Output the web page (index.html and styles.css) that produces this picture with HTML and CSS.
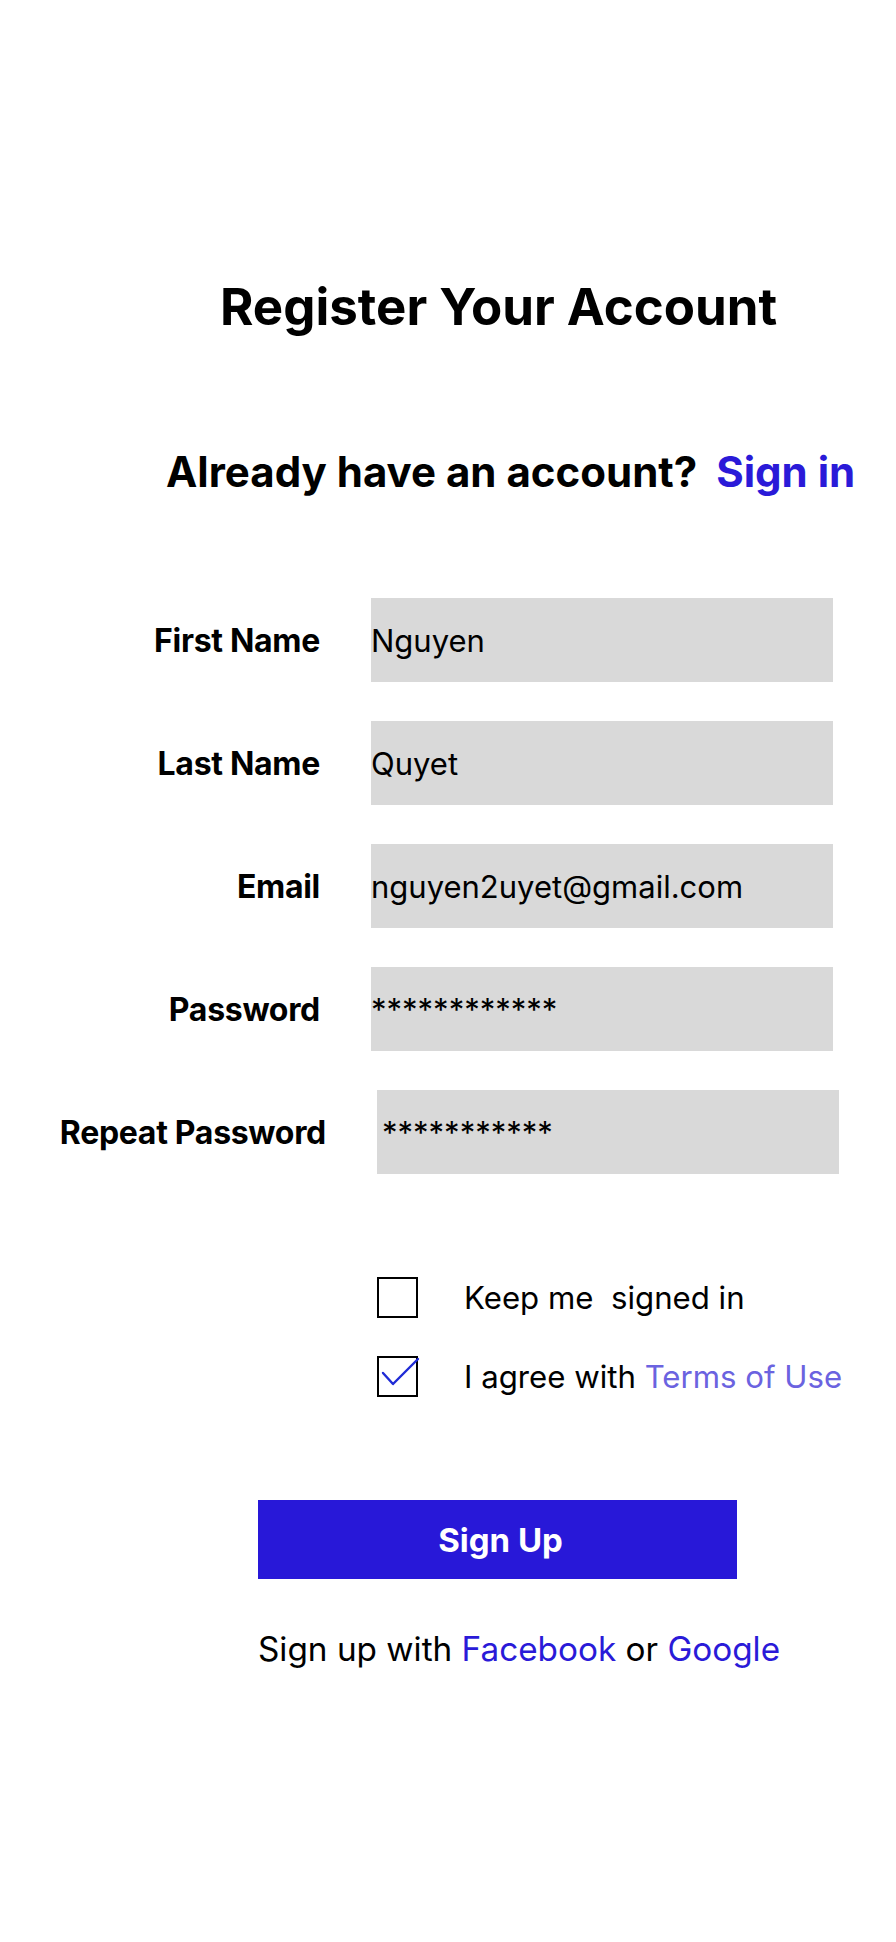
FILE: index.html
```html
<!DOCTYPE html>
<html lang="en">
<head>
<meta charset="utf-8">
<title>Register Your Account</title>
<link rel="stylesheet" href="styles.css">
</head>
<body>
<main class="page">
  <h1 class="title">Register Your Account</h1>
  <p class="signin">Already have an account?<a class="signin-link" href="#">Sign in</a></p>
  <form class="form">
    <div class="row">
      <label class="label">First Name</label>
      <div class="field">Nguyen</div>
    </div>
    <div class="row">
      <label class="label">Last Name</label>
      <div class="field">Quyet</div>
    </div>
    <div class="row">
      <label class="label">Email</label>
      <div class="field">nguyen2uyet@gmail.com</div>
    </div>
    <div class="row">
      <label class="label">Password</label>
      <div class="field">************</div>
    </div>
    <div class="row row-shift">
      <label class="label">Repeat Password</label>
      <div class="field field-pad">***********</div>
    </div>
  </form>
  <div class="checks">
    <div class="check-row">
      <span class="box"></span>
      <span class="check-text">Keep me  signed in</span>
    </div>
    <div class="check-row">
      <span class="box">
        <svg class="tick" viewBox="0 0 42 42" width="42" height="42"><path d="M6 17 L16 28 L41 3" fill="none" stroke="#1f2bd6" stroke-width="2.4" stroke-linecap="round" stroke-linejoin="round"/></svg>
      </span>
      <span class="check-text">I agree with <a class="terms" href="#">Terms of Use</a></span>
    </div>
  </div>
  <button class="btn" type="button">Sign Up</button>
  <p class="social">Sign up with <a class="social-link" href="#">Facebook</a> or <a class="social-link" href="#">Google</a></p>
</main>
</body>
</html>
```
FILE: styles.css
```css
* { box-sizing: border-box; }
html, body { margin: 0; padding: 0; background: #fff; }
body { font-family: Inter, "Noto Sans", sans-serif; color: #000; }
.page {
  display: flex;
  flex-direction: column;
  align-items: flex-start;
  padding-top: 278px;
  min-height: 1942px;
}
.title {
  margin: 0 0 0 220px;
  font-size: 51px;
  line-height: 58px;
  font-weight: 700;
  letter-spacing: 0;
}
.signin {
  margin: 111px 0 0 166px;
  font-size: 42px;
  line-height: 50px;
  font-weight: 700;
  letter-spacing: 0;
  display: flex;
  gap: 19px;
}
.signin-link { color: #2a1ad8; text-decoration: none; }
.form {
  margin-top: 101px;
  display: flex;
  flex-direction: column;
  gap: 39px;
}
.row {
  display: grid;
  grid-template-columns: 320px 462px;
  column-gap: 51px;
  align-items: center;
}
.row-shift { padding-left: 6px; }
.label {
  text-align: right;
  font-size: 32px;
  font-weight: 700;
  letter-spacing: -0.3px;
  white-space: nowrap;
}
.field {
  height: 84px;
  background: #d9d9d9;
  display: flex;
  align-items: center;
  padding-left: 0;
  font-size: 31px;
  font-weight: 400;
}
.field-pad { padding-left: 5px; }
.checks {
  margin: 103px 0 0 377px;
  display: flex;
  flex-direction: column;
  gap: 38px;
}
.check-row {
  display: flex;
  align-items: center;
  gap: 46px;
}
.box {
  width: 41px;
  height: 41px;
  border: 2px solid #000;
  display: block;
  position: relative;
}
.tick { position: absolute; left: -2px; top: -2px; overflow: visible; }
.check-text {
  font-size: 31.2px;
  white-space: pre;
}
.terms { color: #6b63e0; text-decoration: none; }
.btn {
  margin: 103px 0 0 258px;
  width: 479px;
  height: 79px;
  border: 0;
  padding: 0 0 0 6px;
  background: #2818d8;
  color: #fff;
  font-family: Inter, "Noto Sans", sans-serif;
  font-size: 33px;
  font-weight: 700;
  letter-spacing: 0;
}
.social {
  margin: 50px 0 0 258px;
  font-size: 33.3px;
  line-height: 40px;
}
.social-link { color: #2a1ad8; text-decoration: none; }
```
